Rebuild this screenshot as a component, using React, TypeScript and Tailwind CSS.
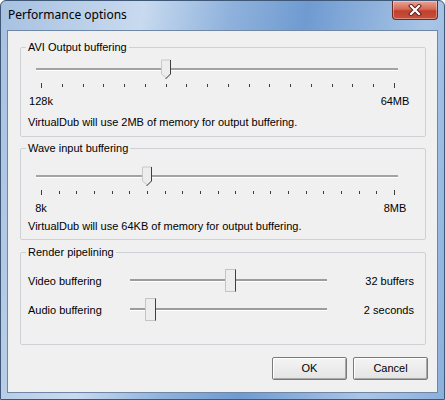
import React from "react";

const dlgFont = "font-['Liberation_Sans',Arial,sans-serif]";

function TickSlider({ ticks, pos }: { ticks: number; pos: number }) {
  const x0 = 20;
  const x1 = 373;
  const step = (x1 - x0) / (ticks - 1);
  const cx = Math.round(x0 + pos * step) + 0.5;
  return (
    <svg width="400" height="32" className="block">
      <rect x="15" y="10" width="362" height="2" fill="#a3a3a3" />
      <rect x="15" y="12" width="362" height="1" fill="#ffffff" />
      {Array.from({ length: ticks }).map((_, i) => {
        const x = Math.round(x0 + i * step);
        const end = i === 0 || i === ticks - 1;
        return <rect key={i} x={x} y={end ? 25 : 26} width="1" height={end ? 5 : 3} fill="#3c3c3c" />;
      })}
      <path d={`M${cx - 5} 2 H${cx + 4} V16 L${cx} 20 L${cx - 5} 16 Z`} fill="#ededed" stroke="#c9c9c9" strokeWidth="1" />
      <path d={`M${cx + 4} 2 V16 L${cx - 1} 21`} fill="none" stroke="#3e3e3e" strokeWidth="1" />
    </svg>
  );
}

function FlatSlider({ pos }: { pos: number }) {
  const cx = pos + 0.5;
  return (
    <svg width="197" height="24" className="block">
      <rect x="0" y="10" width="197" height="2" fill="#9c9c9c" />
      <rect x="0" y="12" width="197" height="1" fill="#ffffff" />
      <rect x={cx - 5} y="0.5" width="10" height="22" fill="#ededed" stroke="#c4c4c4" />
      <path d={`M${cx + 5} 0.5 V22.5`} stroke="#3e3e3e" strokeWidth="1" />
    </svg>
  );
}

function Group({ title, className, children }: { title: string; className?: string; children: React.ReactNode }) {
  return (
    <fieldset className={`w-[406px] ml-[12px] border border-[#cdd1d5] rounded-[2px] ${className ?? ""}`}>
      <legend className="ml-[5px] px-[2px] leading-[14px] text-[11px] text-black">{title}</legend>
      {children}
    </fieldset>
  );
}

function Button({ label }: { label: string }) {
  return (
    <button className="w-[75px] h-[23px] border border-[#7a7a7a] rounded-[2px] bg-[linear-gradient(#f4f4f4,#e4e4e4)] shadow-[inset_1px_1px_0_#ffffff,inset_-1px_-1px_0_#a8a8a8] text-[11px] text-black">
      {label}
    </button>
  );
}

export default function App() {
  return (
    <div className={`w-[445px] h-[400px] flex flex-col border border-[#3f5878] rounded-t-[6px] overflow-hidden bg-[linear-gradient(100deg,#a7c1e1_0%,#c8daef_28%,#8fb2dc_45%,#6f9bd1_60%,#a9c5e6_84%,#8bb0dc_100%)] ${dlgFont}`}>
      <div className="h-[29px] flex justify-between">
        <div className="pl-[7px] pt-[6px] font-['Noto_Sans',sans-serif] text-[12px] leading-[16px] text-black">
          Performance options
        </div>
        <div className="mr-[6px] w-[46px] h-[19px] flex items-center justify-center rounded-b-[4px] border border-t-0 border-[#6b2a24] bg-[linear-gradient(#e9a595,#d66a58_45%,#c0402e_55%,#c8503a)] shadow-[inset_0_0_0_1px_rgba(255,255,255,0.35)]">
          <svg width="14" height="12" viewBox="0 0 14 12">
            <path d="M3 2 L11 10 M11 2 L3 10" stroke="#5a1a14" strokeWidth="4" strokeLinecap="square" />
            <path d="M3 2 L11 10 M11 2 L3 10" stroke="#ffffff" strokeWidth="2.2" strokeLinecap="square" />
          </svg>
        </div>
      </div>
      <div className="flex-1 mx-[6px] mb-[6px] border border-[#6f86a5] bg-[#f0f0f0] flex flex-col text-[11px] text-black">
        <Group title="AVI Output buffering" className="mt-[9px] pb-[7px]">
          <div className="mt-[4px]">
            <TickSlider ticks={18} pos={6} />
          </div>
          <div className="mt-[4px] flex justify-between pr-[10px] leading-[14px]">
            <span className="w-[40px] text-center">128k</span>
            <span className="w-[40px] text-center">64MB</span>
          </div>
          <div className="mt-[7px] pl-[7px] leading-[14px]">VirtualDub will use 2MB of memory for output buffering.</div>
        </Group>
        <Group title="Wave input buffering" className="mt-[4px] pb-[6px]">
          <div className="mt-[10px]">
            <TickSlider ticks={21} pos={6} />
          </div>
          <div className="mt-[4px] flex justify-between pr-[10px] leading-[14px]">
            <span className="w-[40px] text-center">8k</span>
            <span className="w-[40px] text-center">8MB</span>
          </div>
          <div className="mt-[4px] pl-[7px] leading-[14px]">VirtualDub will use 64KB of memory for output buffering.</div>
        </Group>
        <Group title="Render pipelining" className="mt-[5px] pb-[22px]">
          <div className="mt-[10px] flex items-center h-[24px]">
            <span className="w-[109px] pl-[7px]">Video buffering</span>
            <FlatSlider pos={100} />
            <span className="flex-1 text-right pr-[11px]">32 buffers</span>
          </div>
          <div className="mt-[5px] flex items-center h-[24px]">
            <span className="w-[109px] pl-[7px]">Audio buffering</span>
            <FlatSlider pos={20} />
            <span className="flex-1 text-right pr-[11px]">2 seconds</span>
          </div>
        </Group>
        <div className="mt-[12px] flex justify-end gap-[6px] pr-[9px]">
          <Button label="OK" />
          <Button label="Cancel" />
        </div>
      </div>
    </div>
  );
}
